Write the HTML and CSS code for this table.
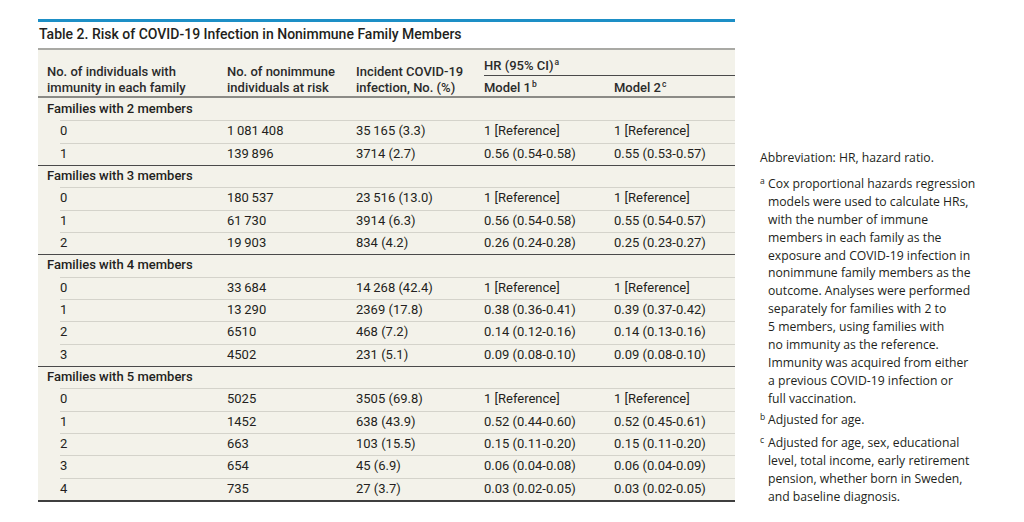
FILE: index.html
```html
<!DOCTYPE html>
<html lang="en">
<head>
<meta charset="utf-8">
<title>Table 2</title>
<link rel="stylesheet" href="styles.css">
</head>
<body>
<div class="page">
  <div class="main">
    <div class="bar"></div>
    <h1 class="title">Table 2. Risk of COVID-19 Infection in Nonimmune Family Members</h1>
    <div class="tbl">
      <div class="thead">
        <div class="th th-first">No. of individuals with<br>immunity in each family</div>
        <div class="th">No. of nonimmune<br>individuals at risk</div>
        <div class="th">Incident COVID-19<br>infection, No. (%)</div>
        <div class="th-hr">
          <div class="hr-label">HR (95% CI)<sup>a</sup></div>
          <div class="hr-models">
            <div class="th">Model 1<sup>b</sup></div>
            <div class="th">Model 2<sup>c</sup></div>
          </div>
        </div>
      </div>

      <div class="sec">Families with 2 members</div>
      <div class="row"><span>0</span><span>1&#8201;081&#8201;408</span><span>35&#8201;165 (3.3)</span><span>1 [Reference]</span><span>1 [Reference]</span></div>
      <div class="row"><span>1</span><span>139&#8201;896</span><span>3714 (2.7)</span><span>0.56 (0.54-0.58)</span><span>0.55 (0.53-0.57)</span></div>

      <div class="sec sep">Families with 3 members</div>
      <div class="row"><span>0</span><span>180&#8201;537</span><span>23&#8201;516 (13.0)</span><span>1 [Reference]</span><span>1 [Reference]</span></div>
      <div class="row"><span>1</span><span>61&#8201;730</span><span>3914 (6.3)</span><span>0.56 (0.54-0.58)</span><span>0.55 (0.54-0.57)</span></div>
      <div class="row"><span>2</span><span>19&#8201;903</span><span>834 (4.2)</span><span>0.26 (0.24-0.28)</span><span>0.25 (0.23-0.27)</span></div>

      <div class="sec sep">Families with 4 members</div>
      <div class="row"><span>0</span><span>33&#8201;684</span><span>14&#8201;268 (42.4)</span><span>1 [Reference]</span><span>1 [Reference]</span></div>
      <div class="row"><span>1</span><span>13&#8201;290</span><span>2369 (17.8)</span><span>0.38 (0.36-0.41)</span><span>0.39 (0.37-0.42)</span></div>
      <div class="row"><span>2</span><span>6510</span><span>468 (7.2)</span><span>0.14 (0.12-0.16)</span><span>0.14 (0.13-0.16)</span></div>
      <div class="row"><span>3</span><span>4502</span><span>231 (5.1)</span><span>0.09 (0.08-0.10)</span><span>0.09 (0.08-0.10)</span></div>

      <div class="sec sep">Families with 5 members</div>
      <div class="row"><span>0</span><span>5025</span><span>3505 (69.8)</span><span>1 [Reference]</span><span>1 [Reference]</span></div>
      <div class="row"><span>1</span><span>1452</span><span>638 (43.9)</span><span>0.52 (0.44-0.60)</span><span>0.52 (0.45-0.61)</span></div>
      <div class="row"><span>2</span><span>663</span><span>103 (15.5)</span><span>0.15 (0.11-0.20)</span><span>0.15 (0.11-0.20)</span></div>
      <div class="row"><span>3</span><span>654</span><span>45 (6.9)</span><span>0.06 (0.04-0.08)</span><span>0.06 (0.04-0.09)</span></div>
      <div class="row"><span>4</span><span>735</span><span>27 (3.7)</span><span>0.03 (0.02-0.05)</span><span>0.03 (0.02-0.05)</span></div>
    </div>
  </div>

  <div class="notes">
    <p class="fn fn-abbr"><span class="fn-text">Abbreviation: HR, hazard ratio.</span></p>
    <p class="fn fn-a"><span class="mark">a</span><span class="fn-text">Cox proportional hazards regression<br>models were used to calculate HRs,<br>with the number of immune<br>members in each family as the<br>exposure and COVID-19 infection in<br>nonimmune family members as the<br>outcome. Analyses were performed<br>separately for families with 2 to<br>5&#160;members, using families with<br>no immunity as the reference.<br>Immunity was acquired from either<br>a previous COVID-19 infection or<br>full vaccination.</span></p>
    <p class="fn fn-b"><span class="mark">b</span><span class="fn-text">Adjusted for age.</span></p>
    <p class="fn"><span class="mark">c</span><span class="fn-text">Adjusted for age, sex, educational<br>level, total income, early retirement<br>pension, whether born in Sweden,<br>and baseline diagnosis.</span></p>
  </div>
</div>
</body>
</html>
```

FILE: styles.css
```css
html, body {
  margin: 0;
  padding: 0;
  background: #ffffff;
}

body {
  font-family: Roboto, "Liberation Sans", sans-serif;
  color: #231f20;
}

.page {
  display: flex;
  align-items: flex-start;
  padding: 19px 0 0 38px;
  gap: 25px;
}

.main {
  width: 697px;
  flex: none;
}

.bar {
  height: 3px;
  background: #1d8fc6;
}

.title {
  margin: 3px 0 5px 1px;
  font-size: 14px;
  line-height: 18px;
  font-weight: 500;
  color: #231f20;
}

.tbl {
  background: #f3f2ea;
  border-top: 2px solid #a9a9a4;
  border-bottom: 2px solid #3f3f3f;
  font-size: 13px;
}

.thead {
  display: grid;
  grid-template-columns: 189px 129px 128px 251px;
  height: 46px;
  border-bottom: 2px solid #8b8b86;
  align-items: end;
  font-weight: 500;
  color: #2b2b2b;
}

.th {
  line-height: 16px;
}

.th-first {
  padding-left: 9px;
}

.th-hr {
  display: flex;
  flex-direction: column;
}

.hr-label {
  line-height: 16px;
  padding-bottom: 1px;
  border-bottom: 1px solid #4a4a4a;
}

.hr-models {
  display: grid;
  grid-template-columns: 130px 121px;
  padding-top: 4px;
}

sup {
  font-size: 8.5px;
  line-height: 0;
  vertical-align: 0.55em;
  margin-left: 1px;
}

.sec {
  height: 22.33px;
  box-sizing: border-box;
  padding: 0 0 2px 9px;
  display: flex;
  align-items: center;
  font-weight: 500;
}

.sec.sep {
  border-top: 1px solid #4a4a4a;
}

.row {
  height: 22.33px;
  box-sizing: border-box;
  margin-left: 22px;
  padding-bottom: 2px;
  border-top: 1px solid #d4d3cb;
  display: grid;
  grid-template-columns: 167px 129px 128px 130px 121px;
  align-items: center;
}

.notes {
  margin-top: 130px;
  font-family: "Open Sans", Roboto, sans-serif;
  font-size: 12.2px;
  line-height: 17.9px;
  color: #231f20;
  white-space: nowrap;
}

.fn {
  margin: 0 0 5.5px 0;
  display: flex;
}

.fn-abbr {
  margin-bottom: 8px;
}

.fn-a {
  margin-bottom: 3px;
}

.fn-b {
  margin-bottom: 5.5px;
}

.mark {
  flex: none;
  width: 8px;
  font-size: 8.5px;
  line-height: 12px;
}
```
